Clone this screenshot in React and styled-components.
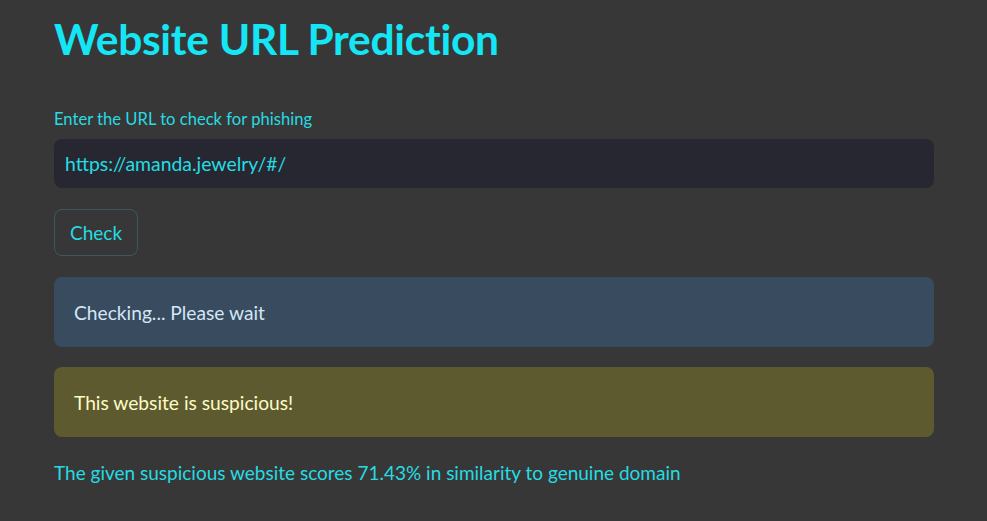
import styled, { createGlobalStyle } from "styled-components";

const GlobalStyle = createGlobalStyle`
  html, body {
    margin: 0;
    padding: 0;
    background: #373737;
  }
  body {
    font-family: "Lato", "Noto Sans", sans-serif;
  }
`;

const Page = styled.div`
  width: 987px;
  height: 521px;
  box-sizing: border-box;
  padding: 14px 53px 0 54px;
  background: #373737;
  display: flex;
  flex-direction: column;
  overflow: hidden;
`;

const Title = styled.h1`
  margin: 0 0 45px;
  font-size: 42.5px;
  font-weight: 700;
  line-height: 50px;
  color: #14e6f5;
  letter-spacing: -0.3px;
`;

const Label = styled.label`
  font-size: 16.6px;
  line-height: 20px;
  color: #26dbe3;
  margin-bottom: 10px;
`;

const Input = styled.input`
  height: 49px;
  box-sizing: border-box;
  border: none;
  border-radius: 8px;
  background: #262730;
  color: #26dbe3;
  font-family: inherit;
  font-size: 19.4px;
  padding: 0 11px;
  outline: none;
  margin-bottom: 21px;
`;

const Button = styled.button`
  align-self: flex-start;
  height: 47px;
  padding: 0 15px;
  border: 1px solid #3b5a60;
  border-radius: 8px;
  background: #373737;
  color: #26dbe3;
  font-family: inherit;
  font-size: 19px;
  margin-bottom: 21px;
`;

const Alert = styled.div`
  height: 70px;
  box-sizing: border-box;
  display: flex;
  align-items: center;
  padding: 0 20px;
  border-radius: 8px;
  background: ${(p) => p.bg};
  color: ${(p) => p.fg};
  font-size: 19.2px;
  margin-bottom: 20px;
`;

const Result = styled.p`
  margin: 4px 0 0;
  font-size: 19px;
  line-height: 24px;
  color: #26dbe3;
`;

export default function App() {
  return (
    <>
      <GlobalStyle />
      <Page>
        <Title>Website URL Prediction</Title>
        <Label>Enter the URL to check for phishing</Label>
        <Input defaultValue="https://amanda.jewelry/#/" />
        <Button>Check</Button>
        <Alert bg="#394b5f" fg="#d3e6f7">Checking... Please wait</Alert>
        <Alert bg="#5e5a2f" fg="#fdfbc6">This website is suspicious!</Alert>
        <Result>
          The given suspicious website scores 71.43% in similarity to genuine domain
        </Result>
      </Page>
    </>
  );
}
